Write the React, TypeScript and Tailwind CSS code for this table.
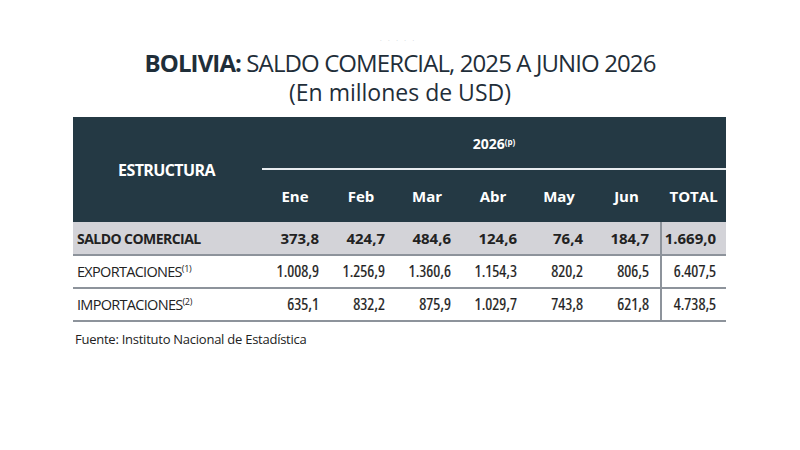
import React from "react";

type Row = {
  label: string;
  sup?: string;
  values: string[];
  total: string;
  strong?: boolean;
};

const months = ["Ene", "Feb", "Mar", "Abr", "May", "Jun"];

const rows: Row[] = [
  {
    label: "SALDO COMERCIAL",
    values: ["373,8", "424,7", "484,6", "124,6", "76,4", "184,7"],
    total: "1.669,0",
    strong: true,
  },
  {
    label: "EXPORTACIONES",
    sup: "(1)",
    values: ["1.008,9", "1.256,9", "1.360,6", "1.154,3", "820,2", "806,5"],
    total: "6.407,5",
  },
  {
    label: "IMPORTACIONES",
    sup: "(2)",
    values: ["635,1", "832,2", "875,9", "1.029,7", "743,8", "621,8"],
    total: "4.738,5",
  },
];

const font = {
  fontFamily: '"Open Sans", "Noto Sans", sans-serif',
};

// regular figures use the condensed cut, slightly thickened
const thin = "font-stretch-condensed text-[16.5px] [-webkit-text-stroke:0.2px_#222]";

export default function App() {
  return (
    <div className="w-[800px] h-[450px] bg-white overflow-hidden" style={font}>
      <div className="flex flex-col items-center pt-[36px]">
        <div className="text-[8px] leading-[8px] text-gray-300 tracking-[6px]">·····</div>
        <h1 className="text-[24px] leading-[28px] text-[#1f2e39] mt-[5px] tracking-[-0.9px]">
          <span className="font-bold">BOLIVIA:</span> SALDO COMERCIAL, 2025 A JUNIO 2026
        </h1>
        <p className="text-[23px] leading-[26px] mt-[2px] text-[#1f2e39]">(En millones de USD)</p>
      </div>

      <table className="ml-[73px] mt-[12px] w-[653px] table-fixed border-collapse text-[15px] text-[#222]">
        <colgroup>
          <col className="w-[189px]" />
          <col className="w-[66px]" />
          <col className="w-[66px]" />
          <col className="w-[66px]" />
          <col className="w-[66px]" />
          <col className="w-[66px]" />
          <col className="w-[69px]" />
          <col className="w-[65px]" />
        </colgroup>
        <thead className="bg-[#243944] text-white">
          <tr className="h-[52px]">
            <th rowSpan={2} className="font-bold text-[16px] text-center tracking-[-0.6px] pr-[2px]">
              ESTRUCTURA
            </th>
            <th colSpan={7} className="font-bold text-[14px] text-center border-b-2 border-[#e8ecef] pt-[2px]">
              2026<sup className="text-[8px]">(p)</sup>
            </th>
          </tr>
          <tr className="h-[53px]">
            {months.map((m) => (
              <th key={m} className="font-bold text-[15px] text-center">
                {m}
              </th>
            ))}
            <th className="font-bold text-[15px] text-center">TOTAL</th>
          </tr>
        </thead>
        <tbody>
          {rows.map((r) => (
            <tr
              key={r.label}
              className={`h-[33px] border-b-2 border-[#8d939b] ${r.strong ? "bg-[#d3d3d8] font-bold" : ""}`}
            >
              <td
                className={`pl-[4px] text-left ${
                  r.strong ? "text-[14px] tracking-[-0.55px]" : "text-[14.5px] tracking-[-0.7px]"
                }`}
              >
                {r.label}
                {r.sup && <sup className="text-[9px] tracking-[-0.3px]">{r.sup}</sup>}
              </td>
              {r.values.map((v, i) => (
                <td
                  key={i}
                  className={`text-right ${i === 5 ? "pr-[11px]" : "pr-[9px]"} ${r.strong ? "" : thin}`}
                >
                  {v}
                </td>
              ))}
              <td className={`text-right pr-[10px] border-l-2 border-[#8d939b] ${r.strong ? "" : thin}`}>
                {r.total}
              </td>
            </tr>
          ))}
        </tbody>
      </table>

      <p className="ml-[75px] mt-[8px] text-[13px] text-[#222] tracking-[-0.25px]">Fuente: Instituto Nacional de Estadística</p>
    </div>
  );
}
